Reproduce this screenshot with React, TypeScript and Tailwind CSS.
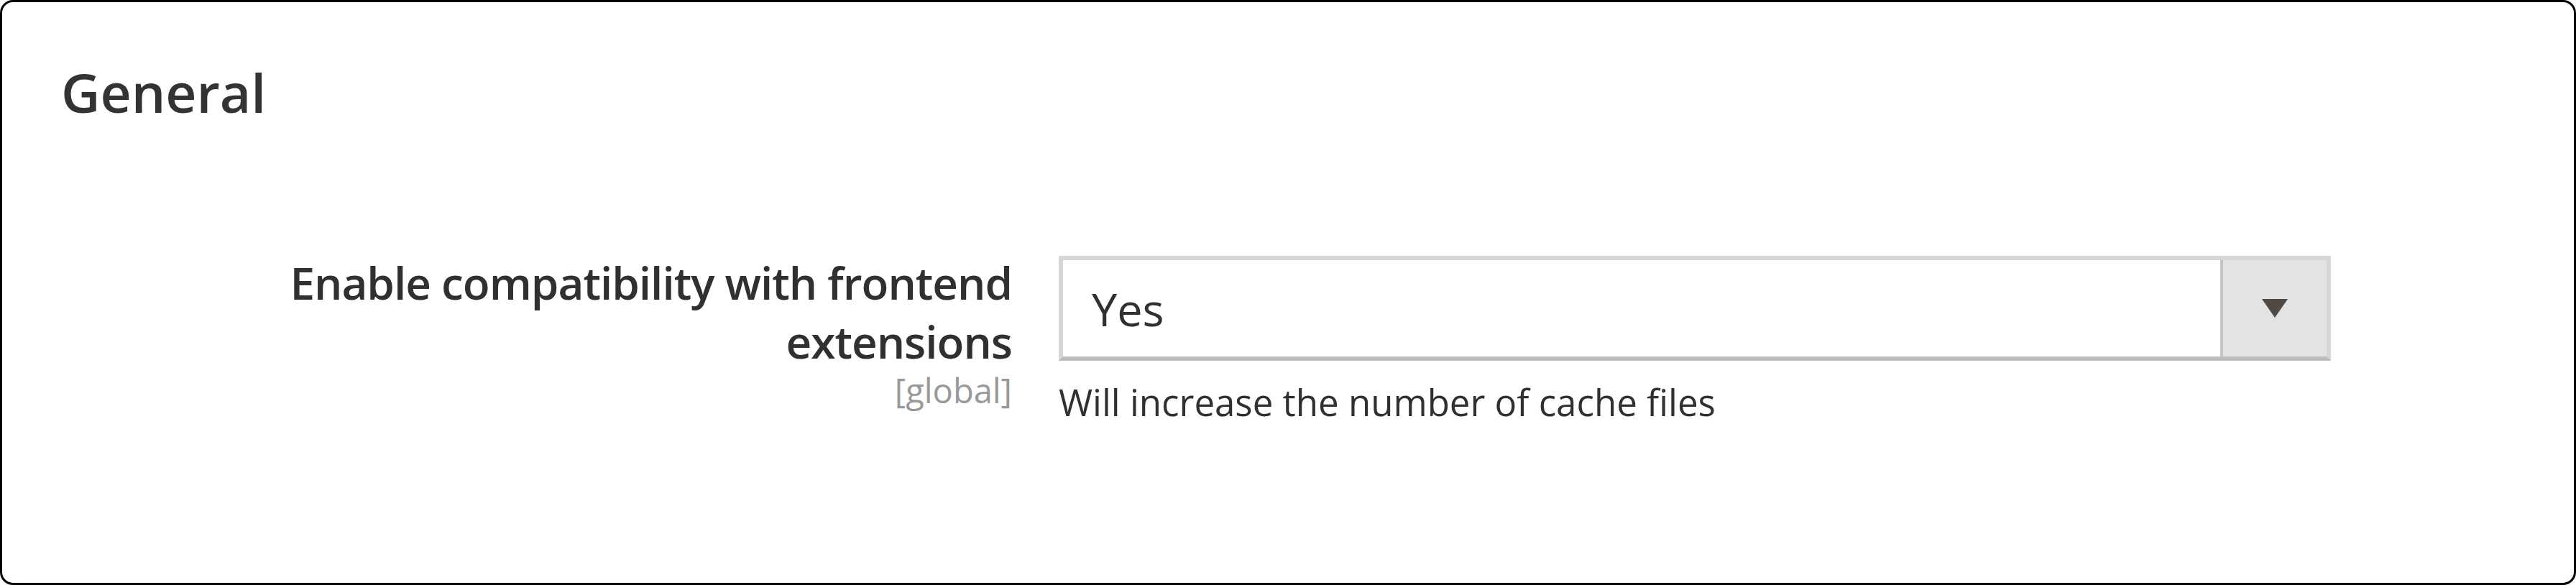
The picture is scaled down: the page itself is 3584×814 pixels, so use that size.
import React from "react";

export default function App() {
  return (
    <div className="w-[3584px] h-[814px] bg-white">
      <div className="w-full h-full border-[3px] border-black rounded-[18px] bg-white font-['Open_Sans',sans-serif] text-[#303030] pl-[82px] pt-[88px]">
        <h2 className="text-[75px] leading-none font-semibold text-[#333333]">General</h2>
        <div className="flex items-start gap-[65px] mt-[186px] -ml-[82px]">
          <div className="w-[1405px] flex flex-col items-end text-right">
            <div className="w-[1100px] text-[62px] leading-[82px] font-semibold tracking-[-1px] text-[#303030]">
              Enable compatibility with frontend extensions
            </div>
            <div className="text-[47px] leading-[54px] text-[#999999]">[global]</div>
          </div>
          <div className="w-[1770px] mt-[4px] flex flex-col">
            <div className="h-[146px] flex border-[6px] border-[#d6d6d6] border-b-[#bdbdbd] bg-white">
              <div className="flex-1 flex items-center pl-[40px] text-[63px] leading-none text-[#303030]">Yes</div>
              <div className="w-[148px] flex items-center justify-center bg-[#e3e3e3] border-l-[4px] border-[#c4c4c4]">
                <svg width="36" height="26" viewBox="0 0 36 26">
                  <polygon points="0,0 36,0 18,26" fill="#514943" />
                </svg>
              </div>
            </div>
            <div className="mt-[24px] text-[51px] leading-[66px] text-[#303030]">
              Will increase the number of cache files
            </div>
          </div>
        </div>
      </div>
    </div>
  );
}
